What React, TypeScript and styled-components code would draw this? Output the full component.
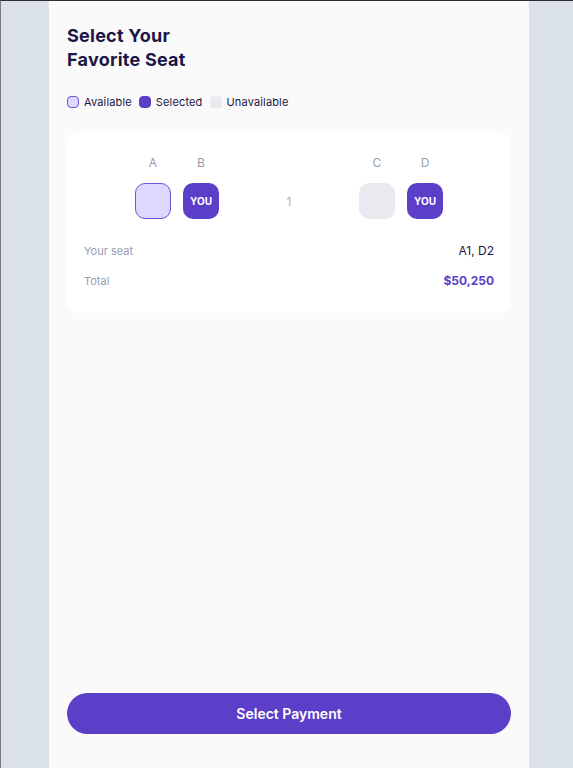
import React from "react";
import styled, { createGlobalStyle } from "styled-components";

const Global = createGlobalStyle`
  html, body { margin: 0; padding: 0; }
  body {
    background: #dae1e9;
    font-family: "Inter", "Noto Sans", sans-serif;
  }
`;

const Frame = styled.div`
  min-height: 767px;
  border-top: 1px solid #2e2e2e;
  border-left: 1px solid #7a7a7a;
  display: flex;
`;

const Column = styled.main`
  width: 480px;
  margin-left: 48px;
  background: #fafafa;
  padding: 23px 18px 34px;
  box-sizing: border-box;
  display: flex;
  flex-direction: column;
`;

const Title = styled.h1`
  margin: 0;
  font-size: 18px;
  line-height: 24px;
  font-weight: 700;
  color: #1c1545;
  letter-spacing: 0.25px;
`;

const Legend = styled.div`
  display: flex;
  align-items: center;
  gap: 7px;
  margin-top: 23px;
  font-size: 11px;
  letter-spacing: 0.15px;
  color: #1c1545;
`;

const LegendItem = styled.span`
  display: inline-flex;
  align-items: center;
  gap: 5px;
`;

type Kind = "available" | "selected" | "unavailable";

const swatch = {
  available: { bg: "#ded8ff", border: "#6b52d1" },
  selected: { bg: "#5b3fc8", border: "#5b3fc8" },
  unavailable: { bg: "#e9eaf0", border: "#e9eaf0" },
};

const Dot = styled.span<{ $kind: Kind }>`
  width: 12px;
  height: 12px;
  border-radius: 4px;
  box-sizing: border-box;
  background: ${(p) => swatch[p.$kind].bg};
  border: 1px solid ${(p) => swatch[p.$kind].border};
`;

const Card = styled.section`
  margin-top: 23px;
  background: #ffffff;
  border-radius: 12px;
  padding: 22px 17px 23px;
`;

const SeatGrid = styled.div`
  display: grid;
  grid-template-columns: 36px 36px 116px 36px 36px;
  column-gap: 12px;
  justify-content: center;
  row-gap: 11px;
  align-items: center;
  justify-items: center;
`;

const ColLabel = styled.span`
  font-size: 12px;
  line-height: 18px;
  color: #9a9cae;
`;

const Seat = styled.div<{ $kind: Kind }>`
  width: 36px;
  height: 36px;
  border-radius: 10px;
  box-sizing: border-box;
  background: ${(p) => swatch[p.$kind].bg};
  border: ${(p) => (p.$kind === "available" ? "1.5px solid #6b52d1" : "none")};
  display: flex;
  align-items: center;
  justify-content: center;
  color: #fff;
  font-size: 10px;
  font-weight: 700;
`;

const RowNum = styled.span`
  font-size: 12px;
  color: #b8a59a;
`;

const Info = styled.div`
  margin-top: 23px;
  display: flex;
  flex-direction: column;
  gap: 12px;
`;

const InfoRow = styled.div`
  display: flex;
  justify-content: space-between;
  align-items: center;
  line-height: 18px;
`;

const InfoLabel = styled.span`
  font-size: 11px;
  color: #9a9cae;
`;

const InfoValue = styled.span<{ $accent?: boolean }>`
  font-size: 12px;
  font-weight: ${(p) => (p.$accent ? 700 : 400)};
  color: ${(p) => (p.$accent ? "#5b3fc8" : "#1c1545")};
`;

const PayButton = styled.button`
  margin-top: auto;
  height: 41px;
  border: none;
  border-radius: 21px;
  background: #5b3fc8;
  color: #fff;
  font-family: inherit;
  font-size: 14px;
  font-weight: 600;
  cursor: pointer;
`;

export default function App() {
  return (
    <>
      <Global />
      <Frame>
        <Column>
          <Title>
            Select Your
            <br />
            Favorite Seat
          </Title>
          <Legend>
            <LegendItem>
              <Dot $kind="available" />
              Available
            </LegendItem>
            <LegendItem>
              <Dot $kind="selected" />
              Selected
            </LegendItem>
            <LegendItem>
              <Dot $kind="unavailable" />
              Unavailable
            </LegendItem>
          </Legend>
          <Card>
            <SeatGrid>
              <ColLabel>A</ColLabel>
              <ColLabel>B</ColLabel>
              <span />
              <ColLabel>C</ColLabel>
              <ColLabel>D</ColLabel>
              <Seat $kind="available" />
              <Seat $kind="selected">YOU</Seat>
              <RowNum>1</RowNum>
              <Seat $kind="unavailable" />
              <Seat $kind="selected">YOU</Seat>
            </SeatGrid>
            <Info>
              <InfoRow>
                <InfoLabel>Your seat</InfoLabel>
                <InfoValue>A1, D2</InfoValue>
              </InfoRow>
              <InfoRow>
                <InfoLabel>Total</InfoLabel>
                <InfoValue $accent>$50,250</InfoValue>
              </InfoRow>
            </Info>
          </Card>
          <PayButton>Select Payment</PayButton>
        </Column>
      </Frame>
    </>
  );
}
